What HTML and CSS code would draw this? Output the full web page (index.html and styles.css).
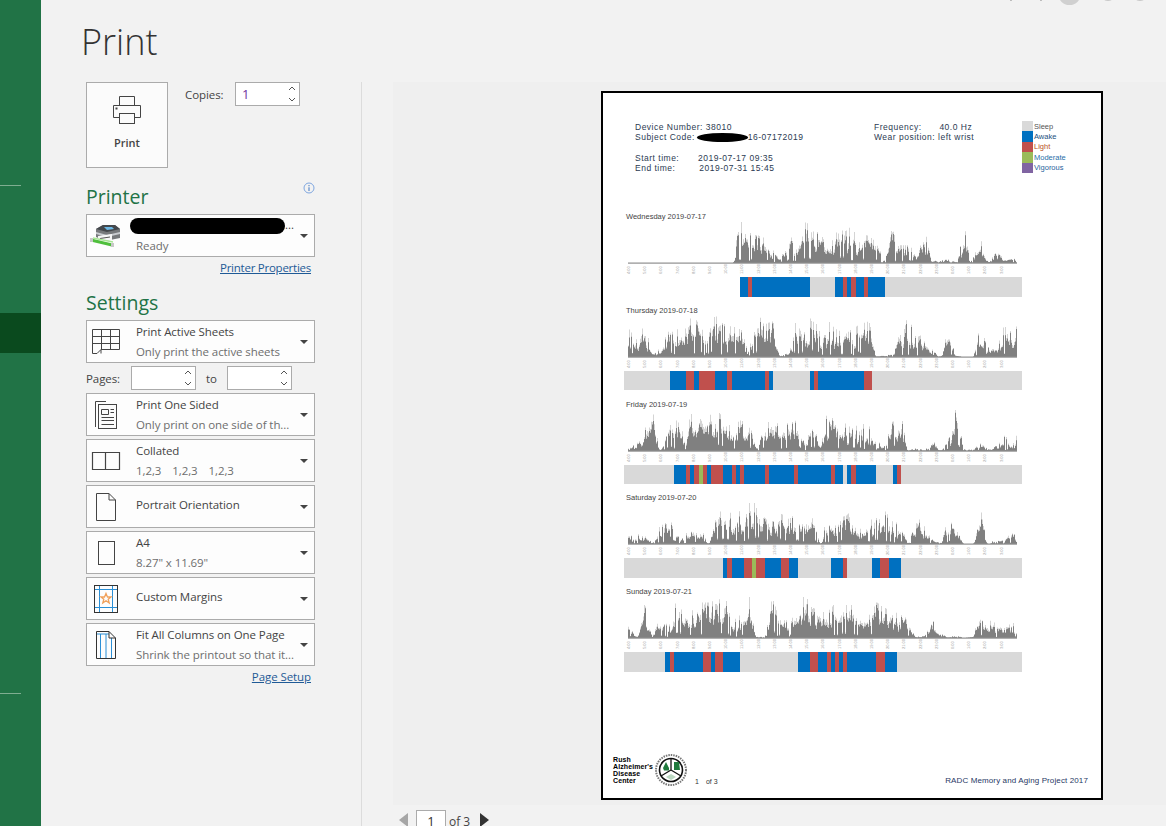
FILE: index.html
```html
<!DOCTYPE html>
<html lang="en">
<head>
<meta charset="utf-8">
<title>Print</title>
<link rel="stylesheet" href="styles.css">
</head>
<body>
<div class="app">
  <nav class="rail">
    <div class="rail-line rail-line-a"></div>
    <div class="rail-active"></div>
    <div class="rail-line rail-line-b"></div>
  </nav>
  <main class="backstage">
    <div class="window-bits">
      <i class="bit bit-a"></i><i class="bit bit-b"></i><i class="bit bit-c"></i><i class="bit bit-d"></i><i class="bit bit-e"></i>
    </div>
    <h1 class="title">Print</h1>
    <div class="panes">
      <section class="options">
        <div class="print-row">
          <button class="print-btn">
            <svg class="print-icon" width="30" height="30" viewBox="0 0 30 30" fill="none" stroke="#444" stroke-width="1">
              <path d="M7.5 10.5V1.5H22.5V10.5"/>
              <path d="M7.5 22.5H1.5V10.5H28.5V22.5H22.5"/>
              <rect x="7.5" y="18.5" width="15" height="10" fill="#fbfbfb"/>
              <rect x="3.5" y="12.5" width="2" height="2" fill="#444" stroke="none"/>
            </svg>
            <span>Print</span>
          </button>
          <label class="copies-label">Copies:</label>
          <div class="spin spin-copies">
            <span class="spin-value">1</span>
            <svg class="chev" width="8" height="18" viewBox="0 0 8 18" fill="none" stroke="#555" stroke-width="1"><path d="M1 5L4 2L7 5M1 13L4 16L7 13"/></svg>
          </div>
        </div>

        <div class="printer-head">
          <h2 class="section">Printer</h2>
          <svg class="info" width="12" height="12" viewBox="0 0 12 12" fill="none"><circle cx="6" cy="6" r="5" stroke="#7ea6e0"/><path d="M6 5.2V9M6 3V4.2" stroke="#4f81c7" stroke-width="1.1"/></svg>
        </div>
        <div class="opt opt-printer">
          <svg class="ico-printer" width="32" height="26" viewBox="0 0 32 26">
            <path d="M6 6L13 2H25L30 6V15L15 18L6 14Z" fill="#77797c"/>
            <path d="M6 6L13 2H25L30 6L17 9Z" fill="#44484c"/>
            <path d="M14 4H22L24 6L17 7Z" fill="#6db9e6"/>
            <path d="M6 9L17 12L30 9V11L17 14L6 11Z" fill="#c9ccd0"/>
            <path d="M8 13L22 11V17L8 19Z" fill="#f7f7f7"/>
            <path d="M10 15L20 13.5V14.5L10 16Z" fill="#555"/>
            <path d="M1 17L22 22" stroke="#4fbf3c" stroke-width="3"/>
            <path d="M3 15L23 19" stroke="#a8e595" stroke-width="1.5"/>
            <rect x="21" y="20" width="3" height="4" fill="#c8c8c8"/>
            <rect x="0" y="15" width="3" height="4" fill="#c8c8c8"/>
          </svg>
          <div class="opt-text printer-text">
            <div class="printer-name"><span class="blob blob-printer"></span><span class="dots">...</span></div>
            <div class="opt-sub">Ready</div>
          </div>
          <i class="caret"></i>
        </div>
        <div class="link-row"><a class="link link-printer">Printer Properties</a></div>

        <h2 class="section section-settings">Settings</h2>
        <div class="opt-list">
          <div class="opt">
            <span class="slot"><svg width="30" height="28" viewBox="0 0 30 28" fill="none" stroke="#444"><path d="M1.5 1.5H28.5V21.5H10L6 25.5H1.5ZM1.5 8.5H28.5M1.5 15.5H28.5M10.5 1.5V21.5M19.5 1.5V21.5M10 21.5V25.5"/></svg></span>
            <div class="opt-text"><div class="opt-title">Print Active Sheets</div><div class="opt-sub">Only print the active sheets</div></div>
            <i class="caret"></i>
          </div>
          <div class="pages">
            <label class="pages-label">Pages:</label>
            <div class="spin spin-pages"><svg class="chev" width="8" height="18" viewBox="0 0 8 18" fill="none" stroke="#555"><path d="M1 5L4 2L7 5M1 13L4 16L7 13"/></svg></div>
            <label class="pages-to">to</label>
            <div class="spin spin-pages"><svg class="chev" width="8" height="18" viewBox="0 0 8 18" fill="none" stroke="#555"><path d="M1 5L4 2L7 5M1 13L4 16L7 13"/></svg></div>
          </div>
          <div class="opt">
            <span class="slot"><svg width="24" height="30" viewBox="0 0 24 30" fill="none" stroke="#444"><path d="M12 1.5H1.5V27"/><rect x="4.5" y="4.5" width="18" height="24" fill="#fbfbfb"/><path d="M7.5 9.5H14.5V14.5H7.5ZM16.5 9.5H20M16.5 12.5H20M7.5 17.5H20M7.5 20.5H20M7.5 24.5H20" stroke-width="1"/></svg></span>
            <div class="opt-text"><div class="opt-title">Print One Sided</div><div class="opt-sub">Only print on one side of th...</div></div>
            <i class="caret"></i>
          </div>
          <div class="opt">
            <span class="slot"><svg width="30" height="20" viewBox="0 0 30 20" fill="none" stroke="#444"><path d="M1.5 1.5H28.5V18.5H1.5ZM14.5 1.5V18.5" stroke-width="1.2"/></svg></span>
            <div class="opt-text"><div class="opt-title">Collated</div><div class="opt-sub opt-collate"><span>1,2,3</span><span>1,2,3</span><span>1,2,3</span></div></div>
            <i class="caret"></i>
          </div>
          <div class="opt">
            <span class="slot"><svg width="22" height="30" viewBox="0 0 22 30" fill="none" stroke="#444"><path d="M1.5 1.5H14L20.5 8V28.5H1.5ZM14 1.5V8H20.5"/></svg></span>
            <div class="opt-text opt-single"><div class="opt-title">Portrait Orientation</div></div>
            <i class="caret"></i>
          </div>
          <div class="opt">
            <span class="slot"><svg width="18" height="26" viewBox="0 0 18 26" fill="none" stroke="#444"><rect x="1.5" y="1.5" width="16" height="23"/></svg></span>
            <div class="opt-text"><div class="opt-title">A4</div><div class="opt-sub">8.27" x 11.69"</div></div>
            <i class="caret"></i>
          </div>
          <div class="opt">
            <span class="slot"><svg width="24" height="30" viewBox="0 0 24 30" fill="none"><path d="M5.5 1V29M18.5 1V29M1 5.5H23M1 23.5H23" stroke="#2b8fd6"/><rect x="0.5" y="1.5" width="23" height="27" stroke="#333"/><path d="M12 9.5L13.5 13H17L14.2 15.2L15.2 19L12 16.8L8.8 19L9.8 15.2L7 13H10.5Z" stroke="#f0a05a" stroke-width="1.3"/></svg></span>
            <div class="opt-text opt-single"><div class="opt-title">Custom Margins</div></div>
            <i class="caret"></i>
          </div>
          <div class="opt">
            <span class="slot"><svg width="22" height="30" viewBox="0 0 22 30" fill="none"><path d="M5.5 4V28M11 4V28M16.5 8V28M1.5 4H14" stroke="#2b8fd6"/><path d="M1.5 1.5H14L20.5 8V28.5H1.5ZM14 1.5V8H20.5" stroke="#333"/></svg></span>
            <div class="opt-text"><div class="opt-title">Fit All Columns on One Page</div><div class="opt-sub">Shrink the printout so that it...</div></div>
            <i class="caret"></i>
          </div>
        </div>
        <div class="link-row link-row-setup"><a class="link">Page Setup</a></div>
      </section>

      <section class="preview">
        <article class="sheet">
          <header class="sheet-head">
            <div class="meta">
              <div>Device Number: 38010</div>
              <div class="subject">Subject Code: <span class="blob blob-subject"></span>16-07172019</div>
              <div class="meta-gap">Start time: <span class="t1">2019-07-17 09:35</span></div>
              <div>End time: <span class="t2">2019-07-31 15:45</span></div>
            </div>
            <div class="meta">
              <div>Frequency: <span class="t3">40.0 Hz</span></div>
              <div>Wear position: left wrist</div>
            </div>
            <ul class="legend">
              <li class="lg lg-sleep">Sleep</li>
              <li class="lg lg-awake">Awake</li>
              <li class="lg lg-light">Light</li>
              <li class="lg lg-mod">Moderate</li>
              <li class="lg lg-vig">Vigorous</li>
            </ul>
          </header>
          <div id="days" class="days"></div>
          <footer class="sheet-foot">
            <div class="rush">Rush<br>Alzheimer's<br>Disease<br>Center</div>
            <svg class="seal" width="32" height="32" viewBox="0 0 32 32" fill="none">
              <circle cx="16" cy="16" r="15" stroke="#777" stroke-width="2" stroke-dasharray="1.5 1"/>
              <circle cx="16" cy="16" r="11.5" fill="#fff" stroke="#111" stroke-width="1.6"/>
              <path d="M16 5V16M16 16L6 22M16 16L26 22" stroke="#111" stroke-width="1.3"/>
              <path d="M8 14L11 8L14 14L14 16.5H9ZM19 8H24L25 16H19Z" fill="#1f7a3d"/>
              <path d="M11 23L16 20L21 23L16 26Z" fill="#bcd8c2"/>
            </svg>
            <div class="page-no"><span>1</span><span>of 3</span></div>
            <div class="project">RADC Memory and Aging Project 2017</div>
          </footer>
        </article>
        <div class="pager">
          <i class="arrow arrow-prev"></i>
          <div class="pager-input">1</div>
          <span class="pager-of">of 3</span>
          <i class="arrow arrow-next"></i>
        </div>
      </section>
    </div>
  </main>
</div>
<script src="chart.js"></script>
</body>
</html>
```
FILE: styles.css
```css
* { box-sizing: border-box; }
html, body { margin: 0; height: 100%; overflow: hidden; }
body { font-family: "Open Sans", "Noto Sans", sans-serif; font-size: 11.5px; letter-spacing: -.08px; color: #444; background: #f2f2f2; }
.app { display: flex; height: 826px; overflow: hidden; }

.rail { width: 41px; flex: none; background: #217346; display: flex; flex-direction: column; }
.rail-line { width: 21px; height: 1px; background: #7fae91; }
.rail-line-a { margin-top: 185px; }
.rail-active { width: 41px; height: 40px; margin-top: 127px; background: #0a4a1e; }
.rail-line-b { margin-top: 340px; }

.backstage { flex: 1; min-width: 0; position: relative; }
.window-bits { position: absolute; inset: 0 0 auto 0; height: 6px; overflow: hidden; }
.bit { position: absolute; top: -4px; background: #c9c9c9; border-radius: 50%; }
.bit-a { left: 969px; width: 2px; height: 5px; background: #999; }
.bit-b { left: 999px; width: 2px; height: 5px; background: #999; }
.bit-c { left: 1017px; top: -18px; width: 23px; height: 23px; background: #d0d0d0; }
.bit-d { left: 1061px; top: -8px; width: 12px; height: 9px; }
.bit-e { left: 1093px; top: -8px; width: 12px; height: 9px; }

.title { margin: 0 0 0 40px; height: 82px; padding-top: 16px; font-size: 36px; line-height: 52px; font-weight: 300; letter-spacing: 0; color: #333; }

.panes { display: flex; height: 744px; }
.options { width: 321px; flex: none; padding-left: 45px; margin-right: 31px; border-right: 1px solid #dcdcdc; }
.print-row { display: flex; align-items: flex-start; height: 86px; }
.print-btn { width: 82px; height: 86px; padding: 12px 0 0; border: 1px solid #ababab; background: #fbfbfb; font: 600 11px "Open Sans", sans-serif; color: #444; display: flex; flex-direction: column; align-items: center; gap: 10px; }
.print-icon { display: block; }
.copies-label { margin: 4px 0 0 17px; width: 50px; line-height: 18px; }
.spin { border: 1px solid #ababab; background: #fff; display: flex; align-items: center; justify-content: space-between; padding: 0 3px 0 6px; }
.spin-copies { width: 65px; height: 24px; }
.spin-value { color: #7030a0; font-size: 13px; }
.chev { display: block; margin-left: auto; }

.printer-head { display: flex; justify-content: space-between; align-items: flex-start; width: 229px; height: 46px; }
.info { margin: 14px 0 0 0; }
.section { margin: 0; font-size: 19.5px; line-height: 28px; font-weight: 400; letter-spacing: 0; color: #217346; }
.printer-head .section { margin-top: 15px; }
.section-settings { margin: 8px 0 3px; }

.opt { width: 229px; height: 43px; border: 1px solid #ababab; background: #fdfdfd; display: flex; align-items: center; position: relative; }
.opt-printer { padding-left: 3px; }
.ico-printer { flex: none; }
.opt-text { margin-left: 11px; flex: 1; min-width: 0; display: flex; flex-direction: column; gap: 2px; white-space: nowrap; }
.opt-single { margin-bottom: 4px; }
.printer-text { margin-left: 14px; }
.opt-title { line-height: 18px; color: #444; }
.opt-sub { line-height: 18px; color: #6e6e6e; }
.printer-name { height: 18px; display: flex; align-items: flex-start; }
.dots { line-height: 16px; color: #444; }
.slot { width: 38px; margin-left: 0; flex: none; display: flex; justify-content: center; }
.slot svg { display: block; }
.caret { position: absolute; right: 6px; top: 19px; width: 0; height: 0; border-left: 4px solid transparent; border-right: 4px solid transparent; border-top: 4px solid #444; }
.blob { display: inline-block; background: #000; border-radius: 50%; }
.blob-printer { width: 155px; height: 16px; margin: 1px 0 0 -6px; border-radius: 8px; }
.link-row { width: 225px; height: 24px; text-align: right; padding-top: 3px; }
.link { color: #1f5a96; text-decoration: underline; }
.link-printer { letter-spacing: -.25px; }
.opt-collate { display: flex; gap: 11px; }
.opt-list { display: flex; flex-direction: column; gap: 3px; }
.pages { display: flex; align-items: center; height: 24px; width: 229px; }
.pages-label { width: 45px; }
.pages-to { width: 31px; text-align: center; }
.spin-pages { width: 65px; height: 24px; }
.link-row-setup { height: 22px; }

.preview { flex: 1; min-width: 0; display: flex; flex-direction: column; background: linear-gradient(#efefef, #efefef) no-repeat 0 0 / 100% 723px; }
.sheet { flex: none; width: 502px; height: 709px; margin: 9px 0 0 208px; background: #fff; border: 2px solid #000; display: flex; flex-direction: column; font-family: "Liberation Sans", Arial, sans-serif; letter-spacing: 0; color: #333; }

.sheet-head { display: grid; grid-template-columns: 239px 148px auto; padding: 29px 0 0 32px; height: 118px; font-size: 8.5px; line-height: 10px; letter-spacing: .5px; color: #2b3a52; }
.subject { display: flex; align-items: center; white-space: pre; }
.blob-subject { width: 51px; height: 9px; margin: 0 0 0 -1px; }
.meta-gap { margin-top: 11px; }
.t1 { margin-left: 16px; }
.t2 { margin-left: 21px; }
.t3 { margin-left: 15px; }
.legend { margin: -1px 0 0; padding: 0; list-style: none; letter-spacing: 0; font-size: 7.5px; }
.lg { height: 10.4px; line-height: 10.4px; padding-top: 1px; display: flex; align-items: center; }
.lg::before { content: ""; width: 11px; height: 10.4px; margin: -1px 1px 0 0; align-self: flex-start; flex: none; }
.lg-sleep::before { background: #d9d9d9; }
.lg-awake::before { background: #0070c0; }
.lg-light::before { background: #c0504d; }
.lg-mod::before { background: #9bbb59; }
.lg-vig::before { background: #8064a2; }
.lg-sleep { color: #555; }
.lg-awake { color: #1a4f80; }
.lg-light { color: #b8501c; }
.lg-mod { color: #1f6fa8; }
.lg-vig { color: #1f5f9c; }

.days { padding-left: 21px; display: grid; grid-auto-rows: 93.75px; }
.day { width: 398px; }
.day-title { height: 11px; padding-left: 2px; line-height: 11px; font-size: 7.5px; color: #444; white-space: nowrap; }
.chart { display: block; }
.tick { font: 4px "Liberation Sans", Arial, sans-serif; fill: #a0a0a0; }
.band { display: flex; height: 19.5px; }
.seg { display: block; height: 100%; }
.seg-n { background: transparent; }
.seg-g { background: #d9d9d9; }
.seg-b { background: #0070c0; }
.seg-r { background: #c0504d; }
.seg-v { background: #9bbb59; }

.sheet-foot { margin-top: auto; display: flex; align-items: flex-end; height: 45px; padding: 0 13px 12px 10px; }
.rush { font-size: 7px; line-height: 7px; font-weight: 700; color: #000; width: 42px; letter-spacing: .1px; margin-bottom: 2px; }
.seal { display: block; margin: 0 8px 0 0; }
.page-no { display: flex; gap: 7px; font-size: 7px; line-height: 10px; color: #333; margin-bottom: -1px; }
.project { margin-left: auto; font-size: 8px; line-height: 10px; letter-spacing: .12px; color: #1f3864; }

.pager { flex: none; display: flex; align-items: flex-start; height: 30px; margin-top: 10px; padding-left: 6px; color: #444; }
.arrow { width: 0; height: 0; border-top: 7px solid transparent; border-bottom: 7px solid transparent; margin-top: 3px; }
.arrow-prev { border-right: 9px solid #a6a6a6; }
.arrow-next { border-left: 9px solid #333; margin-left: 10px; }
.pager-input { width: 30px; height: 26px; margin-left: 8px; border: 1px solid #ababab; background: #fff; text-align: center; line-height: 21px; font-size: 13px; color: #333; }
.pager-of { margin-left: 3px; line-height: 23px; font-size: 12px; }
```
FILE: chart.js
```js
var DAYS = [
  { title: "Wednesday 2019-07-17",
    env: [0,0,0,0,0,0,0,0,0,0,0,0,0,0,38,24,22,20,10,8,24,20,32,30,22,12,24,32,26,16,28,14,4,32,14,14,8,24,3,2,3,1,26,4,18,1,8,4,4],
    band: "n420 b444 r456 b630 g705 b729 r741 b753 r768 b792 r804 b855 g1266" },
  { title: "Thursday 2019-07-18",
    env: [22,14,24,6,6,20,22,22,32,26,30,32,26,24,22,6,36,26,28,1,3,28,22,32,20,28,22,18,22,26,28,1,1,3,24,30,16,18,6,1,20,1,0,0,22,8,8,24,20],
    band: "g210 b258 r282 b297 r345 b381 r396 b495 r507 b519 g630 b642 r654 b792 r816 g1266" },
  { title: "Friday 2019-07-19",
    env: [2,6,18,30,1,20,24,14,30,36,28,32,26,18,24,22,4,20,26,20,22,24,8,24,6,32,20,22,18,22,20,8,4,26,28,1,2,1,8,1,10,36,2,1,6,2,4,12,6],
    band: "g222 b258 r270 b282 r297 v309 r321 b333 r369 b396 r408 b420 r432 b495 r507 b582 r594 b693 r705 b729 g741 b753 r768 b828 g879 b891 r903 g1266" },
  { title: "Saturday 2019-07-20",
    env: [6,8,6,2,14,22,6,8,12,12,1,30,28,24,26,36,32,24,18,24,20,24,14,24,1,26,14,22,26,12,18,22,26,18,16,1,22,14,4,1,20,10,0,0,26,0,4,3,10],
    band: "g369 b381 r396 b432 r456 v468 r495 b543 r567 b594 g693 b729 r741 g816 b840 r867 b903 g1266" },
  { title: "Sunday 2019-07-21",
    env: [10,1,26,2,18,10,28,20,22,28,28,30,32,14,18,34,1,1,30,14,14,30,34,24,20,22,28,26,26,18,18,28,24,18,22,16,1,2,14,3,1,2,0,1,22,14,12,8,12],
    band: "g195 b210 r222 b309 r333 b345 r369 b420 g594 b630 r654 b681 r693 b705 r717 b729 r741 b828 r855 b891 g1266" }
];
var NS = "http://www.w3.org/2000/svg";

function rnd(seed) {
  var s = Math.sin(seed * 127.1 + 311.7) * 43758.5453;
  return s - Math.floor(s);
}

// Turns the hand-read envelope (one value per 8px) into jagged 1px columns.
function columns(env, dayIndex) {
  var peak = [], mean = [];
  for (var x = 0; x < 389; x++) {
    var p = x / 8, i = Math.min(47, Math.floor(p)), f = p - i;
    // ease towards each sample, so low samples stay as real gaps in the trace
    var t = f * f * (3 - 2 * f);
    var e = env[i] + (env[i + 1] - env[i]) * t;
    var r = rnd(x + dayIndex * 1000);
    var slow = rnd(Math.floor(x / 3) + dayIndex * 500);
    var k = 0.25 + 0.5 * slow + 0.45 * r;
    if (r > 0.82) k = 1.15;
    if (r < 0.12) k *= 0.3;
    var pk = Math.min(41, e * k * 1.1);
    peak.push(pk);
    mean.push(pk * (0.7 + 0.25 * rnd(x * 3 + dayIndex * 77 + 5)));
  }
  return { peak: peak, mean: mean };
}

function areaPath(vals, base) {
  var d = "M4 " + base;
  for (var i = 0; i < vals.length; i++) {
    var y = (base - vals[i]).toFixed(1);
    d += "L" + (4 + i) + " " + y + "L" + (5 + i) + " " + y;
  }
  return d + "L" + (4 + vals.length) + " " + base + "Z";
}

function svgEl(name, attrs) {
  var el = document.createElementNS(NS, name);
  for (var k in attrs) el.setAttribute(k, attrs[k]);
  return el;
}

function buildChart(day, idx) {
  var base = 40;
  var svg = svgEl("svg", { "class": "chart", width: 398, height: 55, viewBox: "0 -1 398 55" });
  var c = columns(day.env, idx);
  svg.appendChild(svgEl("path", { d: areaPath(c.peak, base), fill: "#d4d4d4" }));
  svg.appendChild(svgEl("path", { d: areaPath(c.mean, base), fill: "#808080" }));
  svg.appendChild(svgEl("rect", { x: 4, y: base - 0.5, width: 389, height: 1.2, fill: "#8f8f8f" }));
  for (var h = 0; h < 24; h++) {
    var x = 4.5 + h * 16.2;
    var label = ((h + 4) % 24) + ":00";
    var t = svgEl("text", { "class": "tick", transform: "translate(" + (x + 1.5) + " " + (base + 11) + ") rotate(-90)" });
    t.textContent = label;
    svg.appendChild(t);
  }
  return svg;
}

function buildBand(spec) {
  var band = document.createElement("div");
  band.className = "band";
  var prev = 0;
  spec.split(" ").forEach(function (tok) {
    var end = parseInt(tok.slice(1), 10) - 72;
    var seg = document.createElement("span");
    seg.className = "seg seg-" + tok[0];
    seg.style.width = ((end - prev) / 3) + "px";
    band.appendChild(seg);
    prev = end;
  });
  return band;
}

var host = document.getElementById("days");
DAYS.forEach(function (day, idx) {
  var box = document.createElement("div");
  box.className = "day";
  var title = document.createElement("div");
  title.className = "day-title";
  title.textContent = day.title;
  box.appendChild(title);
  box.appendChild(buildChart(day, idx));
  box.appendChild(buildBand(day.band));
  host.appendChild(box);
});
```
